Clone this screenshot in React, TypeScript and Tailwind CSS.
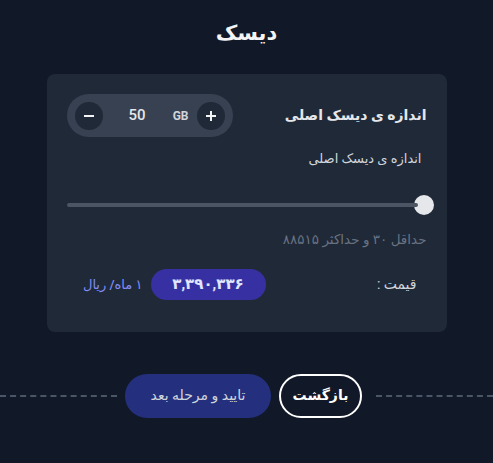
import { useState } from "react";

export default function App() {
  const [size, setSize] = useState(50);

  return (
    <div
      dir="rtl"
      className="min-h-[463px] w-full bg-[#111827] pt-[18px] font-['Roboto','DejaVu_Sans',sans-serif] text-white"
    >
      {/* Title */}
      <h1 className="text-center text-[21px] font-bold leading-[30px] text-gray-100">دیسک</h1>

      {/* Card */}
      <div className="mx-auto mt-[26px] w-[400px] rounded-lg bg-[#1f2937] px-5 pt-5 pb-[32px]">
        <div className="flex items-center justify-between">
          <span className="text-[14px] font-bold text-gray-200">اندازه ی دیسک اصلی</span>
          <div className="flex h-[43px] w-[166px] items-center rounded-full bg-[#374151] px-2">
            <button
              onClick={() => setSize(size + 1)}
              className="flex h-7 w-7 items-center justify-center rounded-full bg-[#1f2937] text-gray-100"
            >
              <svg width="12" height="12" viewBox="0 0 12 12" fill="none" stroke="currentColor" strokeWidth="2">
                <path d="M6 1v10M1 6h10" />
              </svg>
            </button>
            <span dir="ltr" className="mr-[8px] text-[12px] font-bold text-gray-300">GB</span>
            <span dir="ltr" className="mr-[27px] text-[15px] font-medium text-gray-200">{size}</span>
            <button
              onClick={() => setSize(size - 1)}
              className="mr-auto flex h-7 w-7 items-center justify-center rounded-full bg-[#1f2937] text-gray-100"
            >
              <svg width="12" height="12" viewBox="0 0 12 12" fill="none" stroke="currentColor" strokeWidth="2">
                <path d="M1 6h10" />
              </svg>
            </button>
          </div>
        </div>

        <p className="mt-3 pr-[5px] text-[13px] text-gray-300">اندازه ی دیسک اصلی</p>

        {/* Slider */}
        <div className="mt-[26px] flex h-5 items-center">
          <div className="-mr-[7px] h-5 w-5 shrink-0 rounded-full bg-[#e5e7eb]" />
          <div className="-mr-1 h-1 flex-1 rounded-full bg-[#4b5563]" />
        </div>

        <p className="mt-[14px] text-[13.5px] text-gray-500">حداقل ۳۰ و حداکثر ۸۸۵۱۵</p>

        {/* Price */}
        <div className="mt-[20px] flex items-center">
          <span className="mr-[10px] w-[151px] text-[14px] text-gray-300">قیمت :</span>
          <span className="flex h-[31px] w-[115px] items-center justify-center rounded-full bg-[#3730a3] text-[15px] font-bold text-indigo-100">
            ۳,۳۹۰,۳۳۶
          </span>
          <span className="mr-2 text-[13px] font-medium text-[#818cf8]">۱ ماه/ ریال</span>
        </div>
      </div>

      {/* Actions */}
      <div className="mt-[42px] flex items-center gap-2">
        <div className="ml-[6px] flex-1 border-t-2 border-dashed border-gray-600" />
        <button className="h-[44px] w-[83px] rounded-full border-2 border-white text-[14px] font-bold text-white">
          بازگشت
        </button>
        <button className="h-[44px] w-[146px] rounded-full bg-[#24307e] text-[14px] font-medium text-gray-300">
          تایید و مرحله بعد
        </button>
        <div className="flex-1 border-t-2 border-dashed border-gray-600" />
      </div>
    </div>
  );
}
